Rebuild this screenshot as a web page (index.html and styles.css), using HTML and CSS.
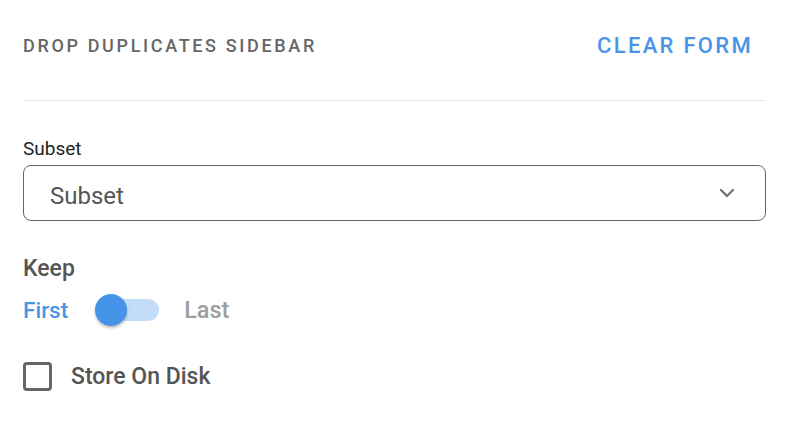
FILE: index.html
```html
<!DOCTYPE html>
<html>
<head>
<meta charset="utf-8">
<link rel="stylesheet" href="styles.css">
</head>
<body>
<div class="sidebar">
  <div class="header">
    <div class="title">DROP DUPLICATES SIDEBAR</div>
    <div class="clear">CLEAR FORM</div>
  </div>
  <div class="divider"></div>
  <div class="field">
    <div class="label">Subset</div>
    <div class="select">
      <span class="placeholder">Subset</span>
      <svg class="chev" width="16" height="10" viewBox="0 0 16 10"><path d="M2 2 L8 8 L14 2" fill="none" stroke="#6b6e75" stroke-width="2.2" stroke-linecap="round" stroke-linejoin="round"/></svg>
    </div>
  </div>
  <div class="keep">
    <div class="keep-label">Keep</div>
    <div class="toggle-row">
      <span class="first">First</span>
      <span class="switch"><span class="track"></span><span class="thumb"></span></span>
      <span class="last">Last</span>
    </div>
  </div>
  <div class="check-row">
    <span class="box"></span>
    <span class="check-label">Store On Disk</span>
  </div>
</div>
</body>
</html>
```
FILE: styles.css
```css
html, body {
  margin: 0;
  padding: 0;
  background: #ffffff;
  font-family: Roboto, "Liberation Sans", sans-serif;
}
.sidebar {
  width: 743px;
  padding: 0 22px 0 23px;
}
.header {
  display: flex;
  justify-content: space-between;
  align-items: center;
  height: 90px;
  padding-right: 13px;
}
.title {
  font-size: 18px;
  font-weight: 500;
  letter-spacing: 2.65px;
  color: #666666;
}
.clear {
  font-size: 22px;
  font-weight: 500;
  letter-spacing: 2.3px;
  color: #4a94e8;
}
.divider {
  height: 1px;
  background: #e6e6ea;
  margin-top: 10px;
}
.field {
  margin-top: 36px;
}
.label {
  font-size: 19px;
  color: #222222;
  line-height: 24px;
}
.select {
  margin-top: 4px;
  height: 54px;
  border: 1px solid #666666;
  border-radius: 8px;
  display: flex;
  align-items: center;
  justify-content: space-between;
  padding: 0 30px 0 26px;
}
.placeholder {
  font-size: 24px;
  color: #555555;
  padding-top: 5px;
}
.keep {
  margin-top: 34px;
}
.keep-label {
  font-size: 23px;
  font-weight: 500;
  color: #555555;
  line-height: 28px;
}
.toggle-row {
  display: flex;
  align-items: center;
  margin-top: 10px;
  height: 34px;
}
.first {
  font-size: 22.5px;
  font-weight: 500;
  color: #4a94e8;
}
.last {
  font-size: 23.5px;
  font-weight: 500;
  color: #9e9e9e;
}
.switch {
  position: relative;
  width: 64px;
  height: 34px;
  margin: 0 25px 0 27px;
}
.track {
  position: absolute;
  left: 2px;
  right: 0;
  top: 6px;
  height: 22px;
  border-radius: 11px;
  background: #c3ddf8;
}
.thumb {
  position: absolute;
  left: 0;
  top: 1px;
  width: 32px;
  height: 32px;
  border-radius: 50%;
  background: #4594e9;
  box-shadow: 0 2px 3px rgba(0,0,0,0.25);
}
.check-row {
  display: flex;
  align-items: center;
  margin-top: 35px;
}
.box {
  width: 23px;
  height: 23px;
  border: 3px solid #666666;
  border-radius: 4px;
}
.check-label {
  margin-left: 19px;
  font-size: 23px;
  font-weight: 500;
  color: #555555;
}
```
